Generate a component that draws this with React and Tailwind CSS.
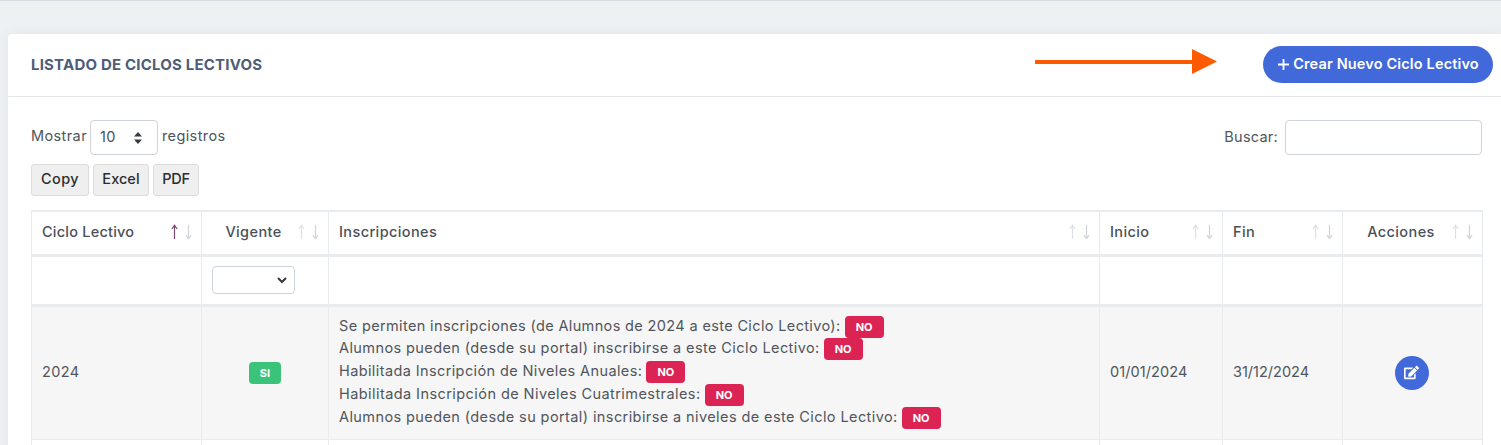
import React from "react";
import { FaEdit } from "react-icons/fa";

const Sort = ({ active }) => (
  <svg width="24" height="16" viewBox="0 0 24 16" className="shrink-0">
    <path d="M3.500 15V1.500M0.800 5 3.500 1.300 6.200 5" fill="none" stroke={active ? "#7c4a6e" : "#dfe1e4"} strokeWidth="1.200" />
    <path d="M17.500 1v13.500M14.800 11l2.700 3.600 2.700-3.600" fill="none" stroke="#cfd2d6" strokeWidth="1.200" />
  </svg>
);

const Th = ({ children, center, active, tight }) => (
  <th className="border border-[#e9ecef] border-b-[3px] h-[44px] pl-[10px] pr-[6px] pb-[2px] font-medium text-[#4b5058]">
    <div className="flex items-center justify-between">
      <span className={`${center ? "flex-1 text-center pr-[3px]" : ""} ${tight ? "tracking-[0.22px]" : ""}`}>{children}</span>
      <Sort active={active} />
    </div>
  </th>
);

const No = () => (
  <span className="inline-block align-middle ml-[4px] w-[39px] h-[22px] leading-[22px] rounded-[4px] bg-[#dc2454] text-white text-[11px] font-bold text-center tracking-normal">NO</span>
);

const lines = [
  ["Se permiten inscripciones (de Alumnos de 2024 a este Ciclo Lectivo):", "tracking-[0.36px]"],
  ["Alumnos pueden (desde su portal) inscribirse a este Ciclo Lectivo:", "tracking-[0.405px]"],
  ["Habilitada Inscripción de Niveles Anuales:", "tracking-[0.39px]"],
  ["Habilitada Inscripción de Niveles Cuatrimestrales:", "tracking-[0.43px]"],
  ["Alumnos pueden (desde su portal) inscribirse a niveles de este Ciclo Lectivo:", "tracking-[0.405px]"],
];

export default function App() {
  return (
    <div className="h-[445px] overflow-hidden bg-[#eef1f4] border-t border-[#d5dbe3] pt-[33px] pl-[8px] text-[14.500px] tracking-[0.39px] text-[#50555c] font-['Inter','Liberation_Sans',sans-serif]">
      <div className="bg-white rounded-tl-[4px] h-[500px] shadow-[0_0_12px_rgba(60,70,90,0.08)]">
        <div className="relative h-[63px] border-b border-[#e3e6ec] flex items-center justify-between pl-[23px] pr-[8px]">
          <h1 className="text-[15px] tracking-[0.2px] font-bold text-[#4e5d78] mb-[1px] pt-[1px]">LISTADO DE CICLOS LECTIVOS</h1>
          <svg width="182" height="26" viewBox="0 0 182 26" className="absolute left-[1027px] top-[15px]">
            <path d="M0 11h157v4H0z" fill="#ff5a00" />
            <path d="M157 0l25 12.500-25 12.500z" fill="#ff5a00" />
          </svg>
          <button className="h-[37px] w-[230px] rounded-full bg-[#4169d9] text-white text-[14.500px] tracking-[0.15px] font-semibold flex items-center justify-center gap-[3px] mb-[2px]">
            <svg width="13" height="13" viewBox="0 0 13 13"><path d="M6.500 1v11M1 6.500h11" stroke="#fff" strokeWidth="1.800" /></svg>
            <span className="pb-[1px]">Crear Nuevo Ciclo Lectivo</span>
          </button>
        </div>

        <div className="pl-[23px] pr-[19px] pt-[23px]">
          <div className="flex justify-between">
            <div>
              <div className="flex items-center gap-[3px] h-[35px]">
                <span className="pb-[3px]">Mostrar</span>
                <div className="w-[68px] h-[35px] border border-[#ced4da] rounded-[4px] flex items-center justify-between pl-[9px] pr-[14px] text-[#495057]">
                  <span className="pb-[2px]">10</span>
                  <svg width="10" height="12" viewBox="0 0 10 12"><path d="M5 0l4 4.500H1zM5 12L1 7.500h8z" fill="#343a40" /></svg>
                </div>
                <span className="pb-[3px] ml-[1px]">registros</span>
              </div>
              <div className="flex gap-[4px] mt-[9px]">
                {[["Copy", "w-[58px] tracking-[0.39px]"], ["Excel", "w-[56px] tracking-[0.05px]"], ["PDF", "w-[46px] tracking-[-0.3px]"]].map(([b, w]) => (
                  <button key={b} className={`h-[32px] ${w} pb-[3px] bg-[#efefef] border border-[#dcdcdc] rounded-[3px] text-[#2b2d31] font-medium`}>{b}</button>
                ))}
              </div>
            </div>
            <div className="flex items-center gap-[7px] h-[35px]">
              <span className="pb-[2px] tracking-[0.25px]">Buscar:</span>
              <div className="w-[197px] h-[35px] border border-[#ced4da] rounded-[4px] bg-white" />
            </div>
          </div>

          <table className="mt-[14px] w-[1451px] table-fixed border-collapse border-t-[2px] border-[#e9ecef]">
            <colgroup>
              <col className="w-[170px]" />
              <col className="w-[127px]" />
              <col className="w-[771px]" />
              <col className="w-[123px]" />
              <col className="w-[120px]" />
              <col className="w-[140px]" />
            </colgroup>
            <thead>
              <tr>
                <Th active tight>Ciclo Lectivo</Th>
                <Th center>Vigente</Th>
                <Th>Inscripciones</Th>
                <Th>Inicio</Th>
                <Th>Fin</Th>
                <Th center>Acciones</Th>
              </tr>
              <tr className="h-[50px]">
                <td className="border border-[#e9ecef] border-b-[3px]" />
                <td className="border border-[#e9ecef] border-b-[3px] px-[10px]">
                  <div className="h-[28px] w-[83px] border border-[#ced4da] rounded-[4px] flex items-center justify-end pr-[7px]">
                    <svg width="10" height="7" viewBox="0 0 10 7"><path d="M1 1l4 4 4-4" fill="none" stroke="#343a40" strokeWidth="2" /></svg>
                  </div>
                </td>
                <td className="border border-[#e9ecef] border-b-[3px]" />
                <td className="border border-[#e9ecef] border-b-[3px]" />
                <td className="border border-[#e9ecef] border-b-[3px]" />
                <td className="border border-[#e9ecef] border-b-[3px]" />
              </tr>
            </thead>
            <tbody>
              <tr className="bg-[#f6f6f6] h-[134px]">
                <td className="border border-[#e9ecef] px-[10px] pb-[2px]">2024</td>
                <td className="border border-[#e9ecef] text-center">
                  <span className="inline-block w-[32px] h-[22px] leading-[22px] rounded-[4px] bg-[#3cc37a] text-white text-[11px] font-bold tracking-normal">SI</span>
                </td>
                <td className="border border-[#e9ecef] px-[10px]">
                  {lines.map(([l, t]) => (
                    <div key={l} className={`h-[22.800px] leading-[22.800px] whitespace-nowrap -translate-y-[1px] ${t}`}>{l}<No /></div>
                  ))}
                </td>
                <td className="border border-[#e9ecef] px-[10px] pb-[2px] tracking-[0.09px]">01/01/2024</td>
                <td className="border border-[#e9ecef] px-[10px] pb-[2px] tracking-[0px]">31/12/2024</td>
                <td className="border border-[#e9ecef] text-center">
                  <button className="inline-flex items-center justify-center w-[34px] h-[34px] mr-[2px] rounded-full bg-[#4169d9] text-white align-middle">
                    <FaEdit size={15} />
                  </button>
                </td>
              </tr>
              <tr className="h-[40px]">
                <td className="border border-[#e9ecef]" /><td className="border border-[#e9ecef]" /><td className="border border-[#e9ecef]" />
                <td className="border border-[#e9ecef]" /><td className="border border-[#e9ecef]" /><td className="border border-[#e9ecef]" />
              </tr>
            </tbody>
          </table>
        </div>
      </div>
    </div>
  );
}
